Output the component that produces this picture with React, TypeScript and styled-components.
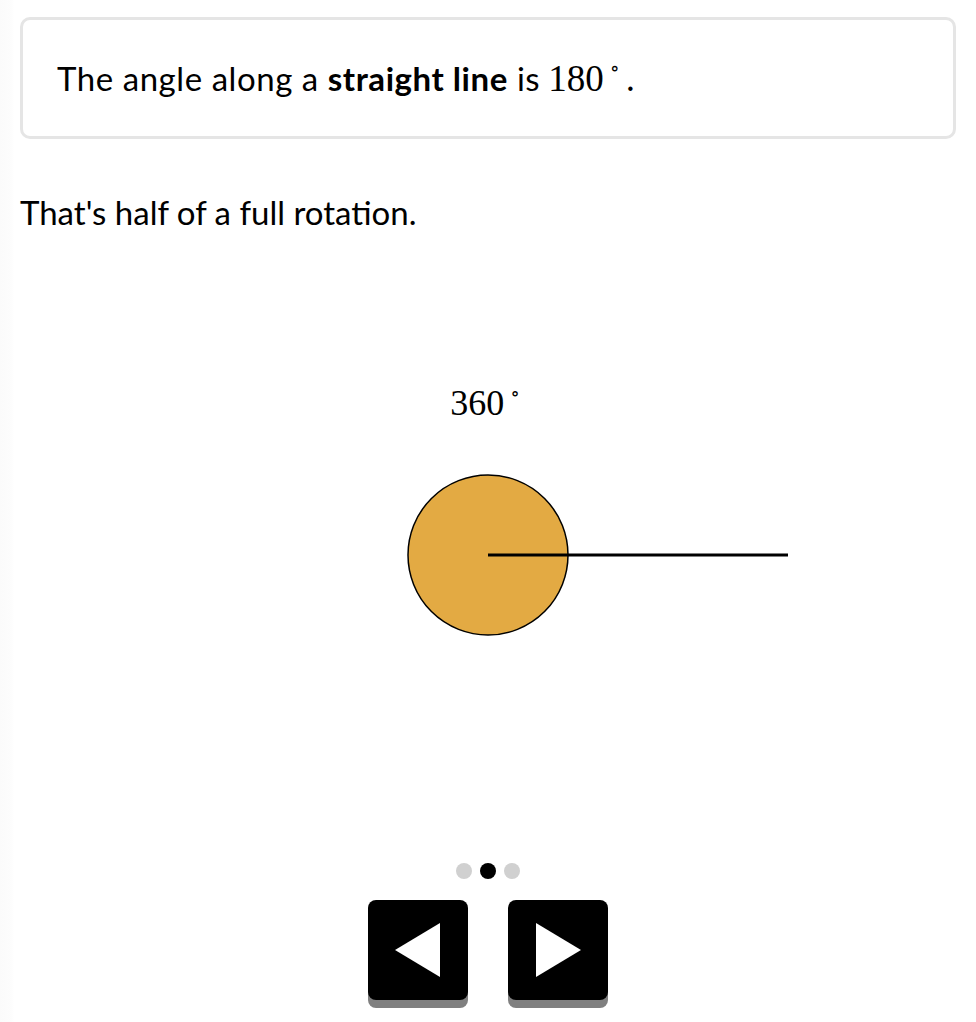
import React from 'react';
import styled, { createGlobalStyle } from 'styled-components';

const GlobalStyle = createGlobalStyle`
  html, body {
    margin: 0;
    padding: 0;
    background: #fff;
  }
  body {
    font-family: Lato, 'Noto Sans', sans-serif;
    color: #000;
  }
`;

const Page = styled.div`
  width: 976px;
  height: 1022px;
  box-sizing: border-box;
  padding: 17px 20px 0;
  background: linear-gradient(to right, #fbfbfb 0, #fdfdfd 12px, #fff 14px);
  display: flex;
  flex-direction: column;
  overflow: hidden;
`;

const Card = styled.div`
  height: 122px;
  box-sizing: border-box;
  border: 3px solid #e5e5e5;
  border-radius: 10px;
  padding: 0 34px;
  display: flex;
  align-items: center;
  font-size: 33px;
  letter-spacing: 0.55px;
`;

const Math = styled.span`
  font-family: 'Liberation Serif', 'DejaVu Serif', serif;
  font-size: 37px;
  letter-spacing: 0;
  margin-left: 8px;
`;

const Degree = styled.sup`
  font-size: 0.55em;
  vertical-align: 0.75em;
  margin: 0 6px;
  line-height: 0;
`;

const Text = styled.p`
  margin: 50px 0 0;
  font-size: 33px;
  line-height: 1.4;
`;

const Figure = styled.div`
  margin-top: 150px;
  display: flex;
  flex-direction: column;
  align-items: center;
`;

const Label = styled.div`
  font-family: 'Liberation Serif', 'DejaVu Serif', serif;
  font-size: 36px;
  line-height: 1;
`;

const Canvas = styled.svg`
  display: block;
  margin-top: 52px;
`;

const Dots = styled.div`
  margin-top: 226px;
  display: flex;
  justify-content: center;
  gap: 8px;
`;

const Dot = styled.span<{ $active?: boolean }>`
  width: 16px;
  height: 16px;
  border-radius: 50%;
  background: ${(p) => (p.$active ? '#000' : '#d0d0d0')};
`;

const Controls = styled.div`
  margin-top: 21px;
  display: flex;
  justify-content: center;
  gap: 40px;
`;

const NavButton = styled.button`
  width: 100px;
  height: 100px;
  padding: 0;
  border: none;
  border-radius: 8px;
  background: #000;
  box-shadow: 0 8px 0 #808080;
  display: flex;
  align-items: center;
  justify-content: center;
  cursor: pointer;
`;

const App: React.FC = () => {
  return (
    <>
      <GlobalStyle />
      <Page>
        <Card>
          <span>
            The angle along a <strong>straight line</strong> is
            <Math>
              180<Degree>∘</Degree>.
            </Math>
          </span>
        </Card>
        <Text>That's half of a full rotation.</Text>
        <Figure>
          <Label>
            360<Degree>∘</Degree>
          </Label>
          <Canvas width={600} height={164} viewBox='0 0 600 164'>
            <circle cx={300} cy={82} r={80} fill='#e3aa43' stroke='#000' strokeWidth={1.5} />
            <line x1={300} y1={82} x2={601} y2={82} stroke='#000' strokeWidth={3} />
          </Canvas>
        </Figure>
        <Dots>
          <Dot />
          <Dot $active />
          <Dot />
        </Dots>
        <Controls>
          <NavButton aria-label='previous'>
            <svg width={46} height={54} viewBox='0 0 46 54'>
              <polygon points='0,27 45,0 45,54' fill='#fff' />
            </svg>
          </NavButton>
          <NavButton aria-label='next'>
            <svg width={46} height={54} viewBox='0 0 46 54'>
              <polygon points='1,0 46,27 1,54' fill='#fff' />
            </svg>
          </NavButton>
        </Controls>
      </Page>
    </>
  );
};

export default App;
